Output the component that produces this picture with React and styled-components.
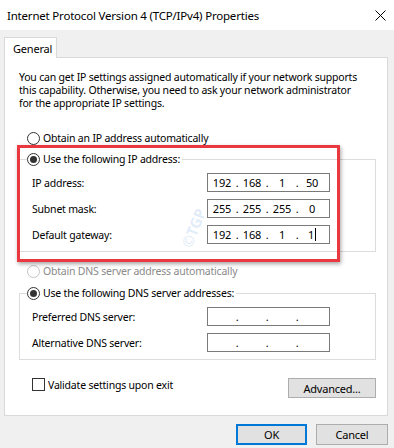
import React from 'react';
import styled, { createGlobalStyle } from 'styled-components';

const GlobalStyle = createGlobalStyle`
  html, body {
    margin: 0;
    padding: 0;
    background: #f0f0f0;
  }
  * {
    box-sizing: border-box;
  }
`;

const UiFont = `'Noto Sans', 'Open Sans', sans-serif`;

const Window = styled.div`
  width: 394px;
  height: 448px;
  background: #f0f0f0;
  font-family: ${UiFont};
  font-size: 10.5px;
  letter-spacing: -0.2px;
  color: #000;
  display: flex;
  flex-direction: column;
  overflow: hidden;
`;

const TitleBar = styled.div`
  height: 30px;
  background: #fff;
  display: flex;
  align-items: center;
  justify-content: space-between;
  padding: 0 8px 0 7px;
`;

const Title = styled.span`
  font-size: 11.5px;
  letter-spacing: -0.2px;
  color: #000;
`;

const Body = styled.div`
  padding: 7px 6px 0 4px;
  display: flex;
  flex-direction: column;
`;

const TabStrip = styled.div`
  display: flex;
  height: 21px;
  margin-bottom: -1px;
  position: relative;
  z-index: 1;
`;

const Tab = styled.div`
  width: 53px;
  background: #fff;
  border: 1px solid #d9d9d9;
  border-bottom: none;
  padding: 3px 0 0 8px;
  font-size: 11px;
`;

const Panel = styled.div`
  position: relative;
  height: 359px;
  background: #fff;
  border: 1px solid #d9d9d9;
  display: flex;
  flex-direction: column;
`;

const Intro = styled.p`
  margin: 13px 0 0 14px;
  line-height: 13px;
  white-space: nowrap;
`;

const Choice = styled.label`
  display: flex;
  align-items: center;
  gap: 3px;
  height: 13px;
  line-height: 13px;
  color: ${(p) => (p.disabled ? '#8a8a8a' : '#000')};
  margin: ${(p) => p.$margin || '0'};
`;

const RadioDot = styled.span`
  width: 13px;
  height: 13px;
  border-radius: 50%;
  border: 1px solid ${(p) => (p.disabled ? '#c4c4c4' : '#333')};
  background: #fff;
  display: flex;
  align-items: center;
  justify-content: center;
  flex: none;
  &::after {
    content: '';
    width: 7px;
    height: 7px;
    border-radius: 50%;
    background: ${(p) => (p.checked ? '#333' : 'transparent')};
  }
`;

const Group = styled.fieldset`
  margin: ${(p) => p.$top}px 11px 0 14px;
  padding: 7px 44px 7px 12px;
  border: 1px solid #dcdcdc;
  display: flex;
  flex-direction: column;
  gap: 7px;
  min-width: 0;
`;

const Legend = styled.legend`
  padding: 0 2px 0 0;
  margin-left: -5px;
`;

const FieldRow = styled.div`
  display: flex;
  align-items: center;
  height: 19px;
`;

const FieldLabel = styled.span`
  width: 175px;
  flex: none;
`;

const IpBox = styled.div`
  width: 123px;
  height: 19px;
  border: 1px solid #7a7a7a;
  background: #fff;
  display: flex;
  align-items: center;
  padding-left: 1px;
  font-size: 11px;
`;

const Octet = styled.span`
  width: 26px;
  text-align: center;
`;

const Dot = styled.span`
  width: 4px;
  text-align: center;
`;

const Caret = styled.span`
  display: inline-block;
  width: 1px;
  height: 13px;
  background: #000;
  margin-left: 1px;
  vertical-align: -2px;
`;

const BottomRow = styled.div`
  display: flex;
  justify-content: space-between;
  align-items: flex-start;
  margin: 18px 11px 0 27px;
`;

const CheckLabel = styled.label`
  display: flex;
  align-items: center;
  gap: 3px;
  height: 13px;
`;

const CheckBox = styled.span`
  width: 13px;
  height: 13px;
  border: 1px solid #333;
  background: #fff;
  flex: none;
`;

const Button = styled.button`
  font-family: ${UiFont};
  font-size: 11px;
  letter-spacing: -0.2px;
  color: #000;
  height: ${(p) => p.$h || 21}px;
  width: ${(p) => p.$w}px;
  background: #e1e1e1;
  border: ${(p) => (p.$default ? '2px solid #0078d7' : '1px solid #adadad')};
  padding: 0;
`;

const Footer = styled.div`
  display: flex;
  justify-content: flex-end;
  gap: 9px;
  padding: 8px 0 0;
`;

const Highlight = styled.div`
  position: absolute;
  left: 12px;
  top: 87px;
  width: 323px;
  height: 117px;
  border: 3px solid #e9383f;
  box-shadow: 1px 2px 4px rgba(0, 0, 0, 0.35);
  pointer-events: none;
`;

const Watermark = styled.div`
  position: absolute;
  left: 168px;
  top: 160px;
  font-size: 15px;
  font-weight: 700;
  color: rgba(120, 170, 225, 0.22);
  transform: rotate(-68deg);
  pointer-events: none;
`;

const Radio = ({ checked, disabled, children, margin }) => (
  <Choice disabled={disabled} $margin={margin}>
    <RadioDot checked={checked} disabled={disabled} />
    {children}
  </Choice>
);

const IpField = ({ parts, caret }) => (
  <IpBox>
    {[0, 1, 2, 3].map((i) => (
      <React.Fragment key={i}>
        <Octet>
          {parts ? parts[i] : ''}
          {caret && i === 3 ? <Caret /> : null}
        </Octet>
        {i < 3 ? <Dot>.</Dot> : null}
      </React.Fragment>
    ))}
  </IpBox>
);

const Field = ({ label, parts, caret }) => (
  <FieldRow>
    <FieldLabel>{label}</FieldLabel>
    <IpField parts={parts} caret={caret} />
  </FieldRow>
);

const CloseIcon = () => (
  <svg width="11" height="11" viewBox="0 0 11 11">
    <path d="M0.5 0.5 L10.5 10.5 M10.5 0.5 L0.5 10.5" stroke="#000" strokeWidth="1" />
  </svg>
);

const App = () => {
  return (
    <Window>
      <GlobalStyle />
      <TitleBar>
        <Title>Internet Protocol Version 4 (TCP/IPv4) Properties</Title>
        <CloseIcon />
      </TitleBar>
      <Body>
        <TabStrip>
          <Tab>General</Tab>
        </TabStrip>
        <Panel>
          <Intro>
            You can get IP settings assigned automatically if your network supports
            <br />
            this capability. Otherwise, you need to ask your network administrator
            <br />
            for the appropriate IP settings.
          </Intro>
          <Radio margin="22px 0 0 22px">Obtain an IP address automatically</Radio>
          <Group $top={8}>
            <Legend>
              <Radio checked>Use the following IP address:</Radio>
            </Legend>
            <Field label="IP address:" parts={['192', '168', '1', '50']} />
            <Field label="Subnet mask:" parts={['255', '255', '255', '0']} />
            <Field label="Default gateway:" parts={['192', '168', '1', '1']} caret />
          </Group>
          <Radio disabled margin="13px 0 0 22px">
            Obtain DNS server address automatically
          </Radio>
          <Group $top={9}>
            <Legend>
              <Radio checked>Use the following DNS server addresses:</Radio>
            </Legend>
            <Field label="Preferred DNS server:" />
            <Field label="Alternative DNS server:" />
          </Group>
          <BottomRow>
            <CheckLabel>
              <CheckBox />
              Validate settings upon exit
            </CheckLabel>
            <Button $w={88} $h={20}>Advanced...</Button>
          </BottomRow>
          <Highlight />
          <Watermark>©TGP</Watermark>
        </Panel>
        <Footer>
          <Button $w={71} $default>OK</Button>
          <Button $w={72}>Cancel</Button>
        </Footer>
      </Body>
    </Window>
  );
};

export default App;
